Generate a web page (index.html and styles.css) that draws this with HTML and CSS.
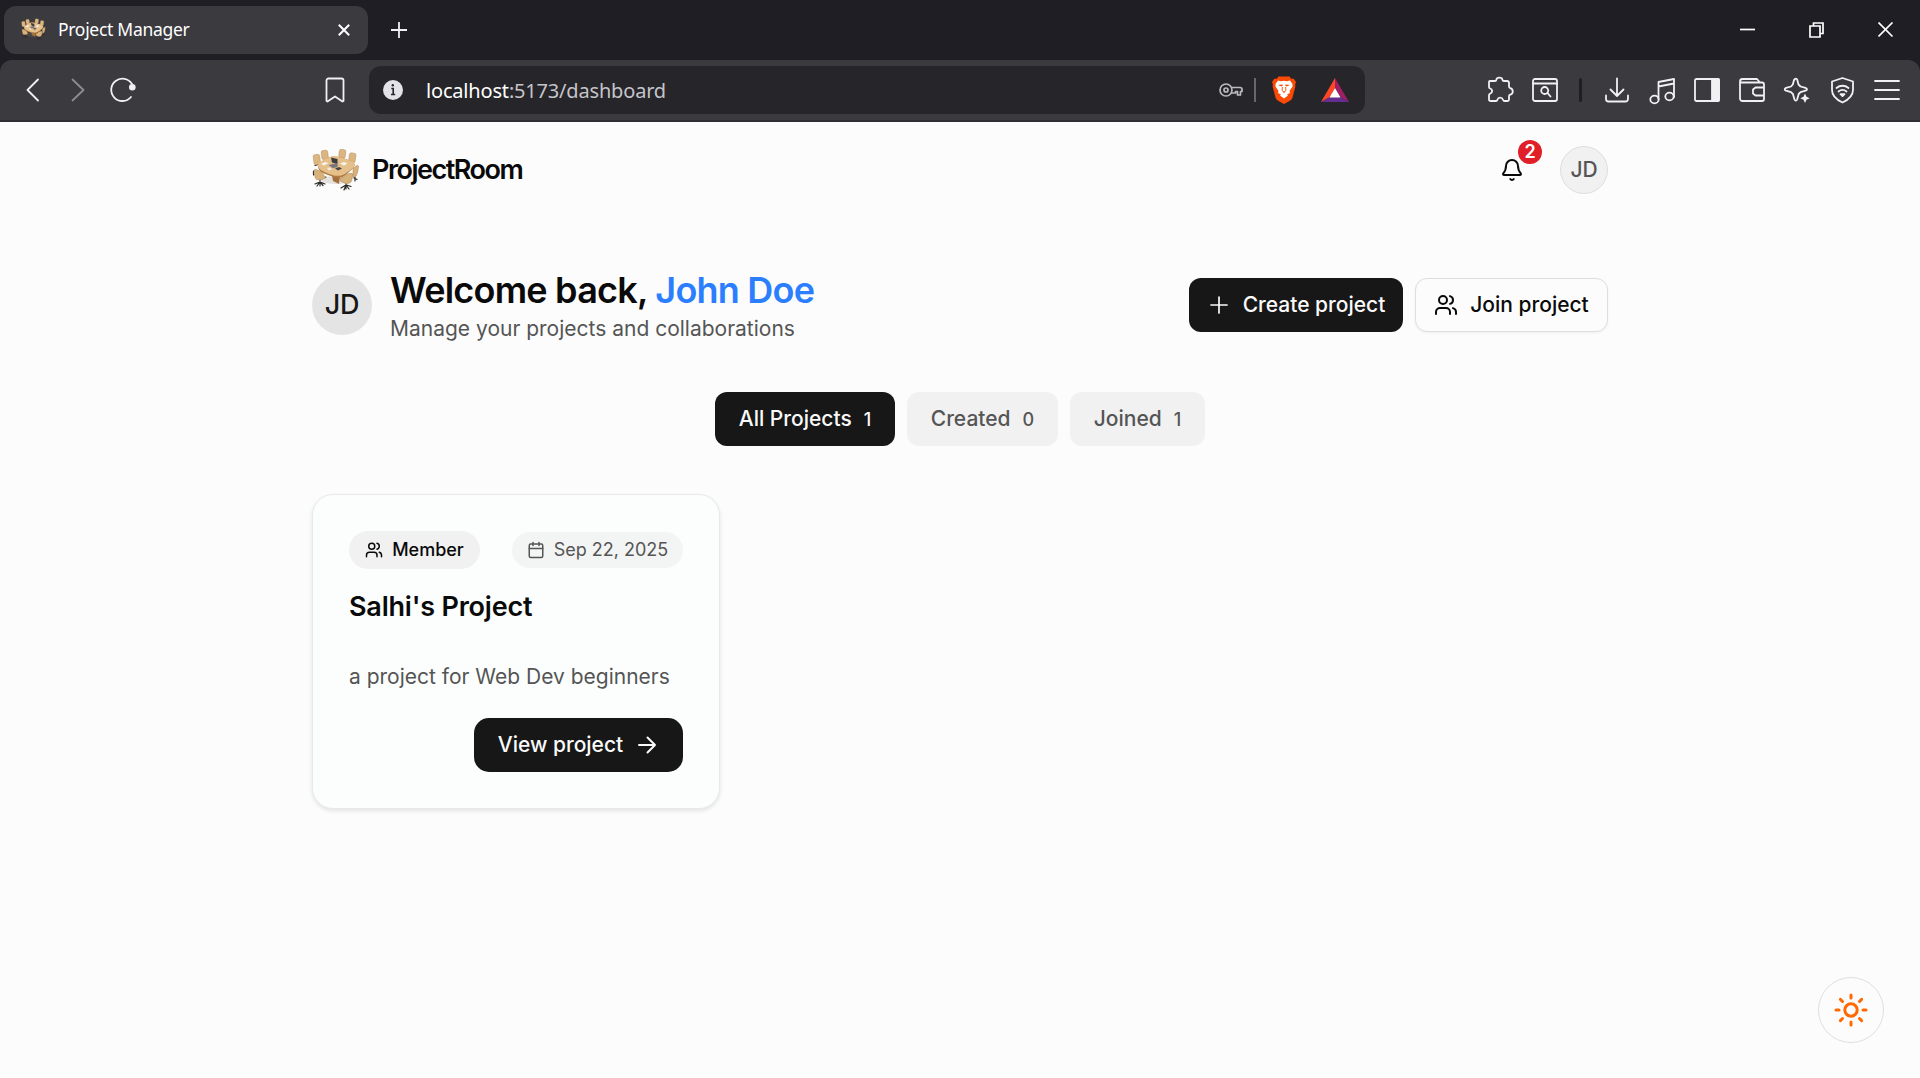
FILE: index.html
```html
<!DOCTYPE html>
<html lang="en">
<head>
<meta charset="utf-8">
<title>Project Manager</title>
<link rel="stylesheet" href="styles.css">
</head>
<body>
<svg class="defs" aria-hidden="true">
  <symbol id="room" viewBox="0 0 48 48">
    <ellipse cx="24" cy="34" rx="15" ry="4" fill="#8a7a68" opacity=".2"/>
    <g fill="none" stroke="#2f2b29" stroke-width="1.200" stroke-linecap="round">
      <path d="M3 19.500l5-1.500M14 13l4-.500M27 11.500l3 1M38 16.500l3 1M8 34v6M3 38l5-2 5 2M5 40l3-4 3 3.500M1.500 29v-4M34 37v6M29 42l5-3 5 1.500M32 44l2-5 3 4M42 32l3 1.500M43 31v4M10 32l4-1"/>
    </g>
    <g fill="#dcb680" stroke="#b08a58" stroke-width=".5">
      <rect x="1.500" y="8.500" width="6.500" height="10" rx="1.800" transform="rotate(-7 5 13)"/>
      <rect x="9.500" y="4.500" width="6.500" height="9" rx="1.800" transform="rotate(-7 12 9)"/>
      <rect x="27" y="3.500" width="6.500" height="8.500" rx="1.800" transform="rotate(7 30 8)"/>
      <rect x="37" y="7" width="6.500" height="9.500" rx="1.800" transform="rotate(7 40 12)"/>
    </g>
    <path d="M20 29l8 1-1 8-6-3z" fill="#a46f3a"/>
    <path d="M6 20c0-2 4-5 9-8 4-2 9-2 14-.500 5 1.500 12 3.500 13.500 6.500 1 3-3 6-9 11-3.500 3-8 3.500-13 1.500C12 27.500 6 26 6 20z" fill="#b17b42"/>
    <path d="M6 19c0-2 4-4.500 9-7 4-2 9-2 14-.500 5 1.500 12 3.500 13.500 6 1 3-3 6-9 10-3.500 2.500-8 3-13 1.500C12 26 6 24 6 19z" fill="#e6c08a"/>
    <path d="M16.500 19l7-1.500 3 1.500-2 2.500-4 .500z" fill="#77777c"/>
    <path d="M19 11.500l6.500 1.500v5l-5.500-1.500z" fill="#3c3c43"/>
    <path d="M9 18l4-2 3.500 1-4.500 2.500zM28 17.500l4-1.500 3.500 1.500-3.500 2z" fill="#f4f4f1"/>
    <path d="M15 22l3.500-.500 1.500 2-3.500 1z" fill="#f1e8dc"/>
    <path d="M23 22.500l4-1.500 3 1.500-4 2z" fill="#4a4644"/>
    <g fill="#d8b27b" stroke="#a97d4c" stroke-width=".5">
      <path d="M2 24.500c0-1.500 3-1 5.500.500 2 1 3.500 2 4 3.500l2 3.500-5 2-4-.500c-1.500-1-2-4-2.500-9z"/>
      <path d="M28.500 32l4-1.500c0-1.500 1-2 3-2.500 3-.800 5-1 5 0 0 3-.500 7-2 8.500l-4 1.500-6-3z"/>
      <path d="M41 23l3-3c1.500-1 2.500-.500 2.500.500-.500 4-1 7-2.500 9.500l-3 1.500z"/>
    </g>
  </symbol>
  <symbol id="users" viewBox="0 0 24 24">
    <path d="M16 21v-2a4 4 0 0 0-4-4H6a4 4 0 0 0-4 4v2M16 3.128a4 4 0 0 1 0 7.744M22 21v-2a4 4 0 0 0-3-3.870"/><circle cx="9" cy="7" r="4"/>
  </symbol>
</svg>

<div class="chrome">
  <div class="tabstrip">
    <div class="tab">
      <svg class="favicon"><use href="#room"/></svg>
      <span class="tab-title">Project Manager</span>
      <svg class="tab-close" viewBox="0 0 12 12"><path d="M.8.800l10.400 10.400M11.200.800L.8 11.200"/></svg>
    </div>
    <svg class="new-tab" viewBox="0 0 18 18"><path d="M9 1v16M1 9h16"/></svg>
    <div class="window-controls">
      <svg viewBox="0 0 16 16"><path d="M0 7.500h15"/></svg>
      <svg viewBox="0 0 16 16"><path d="M1 4h10v11H1zM4.500 4V1H14v10.500h-3"/></svg>
      <svg viewBox="0 0 16 16"><path d="M.5.500l14 14M14.500.500l-14 14"/></svg>
    </div>
  </div>

  <div class="toolbar">
    <div class="nav-icons">
      <svg class="ti" viewBox="0 0 30 30"><path d="M20 4.500L9.500 15 20 25.500"/></svg>
      <svg class="ti dim" viewBox="0 0 30 30"><path d="M9.500 4.500L20.500 15l-11 10.500"/></svg>
      <svg class="ti" viewBox="0 0 30 30"><path d="M24 9A11.200 11.200 0 1 0 23 22"/><circle cx="24.300" cy="12.300" r="3.300" fill="#f1f1f4" stroke="none"/></svg>
    </div>
    <svg class="ti bookmark" viewBox="0 0 30 30"><path d="M6.500 5.500a2 2 0 0 1 2-2h13a2 2 0 0 1 2 2v20.500l-1 .500L15 21.500 7.500 26.500l-1-.500z"/></svg>
    <div class="address">
      <svg class="info" viewBox="0 0 20 20"><circle cx="10" cy="10" r="10" fill="#e2e2e8"/><path d="M8.300 8.500h1.900v6M8 14.500h4.200" fill="none" stroke="#26252a" stroke-width="1.600"/><circle cx="9.800" cy="5.300" r="1.200" fill="#26252a"/></svg>
      <span class="url"><b>localhost</b>:5173/dashboard</span>
      <svg class="key" viewBox="0 0 24 16"><circle cx="7" cy="8" r="6"/><circle cx="7" cy="8" r="2"/><path d="M12.500 5.500H21a2 2 0 0 1 2 2v2h-1.500V13h-3V9.500h-2V11h-4"/></svg>
      <i class="address-sep"></i>
      <svg class="brave" viewBox="0 0 24 28">
        <path d="M6.500.5h11l2 2.500 2-.500L24 6l-1 3 .500 1-3 11.500c-.500 1.500-1.500 2.500-3 3.500L12 28l-5.500-3c-1.500-1-2.500-2-3-3.500L.5 10 1 9 0 6l2.500-3.500 2 .500z" fill="#fb4a05"/>
        <path d="M6 4.500l3 .700 3-.500 3 .500 3-.700L20.500 8v2.500L17.500 15l.500 2-3 1.500 1 1-4 3-4-3 1-1L6 17l.500-2-3-4.500V8z" fill="#fff"/>
        <path d="M6 9l4.500-.6.300 1-1.300 1.200zM18 9l-4.500-.6-.3 1 1.300 1.200z" fill="#fb4a05"/>
        <path d="M10.500 11L10 14.500l2 1.500 2-1.500-.5-3.500M12 16v1.300" fill="none" stroke="#fb4a05" stroke-width=".9"/>
      </svg>
      <svg class="bat" viewBox="0 0 28 24"><path d="M14 0L0 24l9-5 5-9z" fill="#ff4724"/><path d="M14 0l14 24-9-5-5-9z" fill="#9e1f63"/><path d="M0 24l9-5h10l9 5z" fill="#662d91"/><path d="M14 10l-5.500 9.500h11z" fill="#fff"/></svg>
    </div>
    <div class="ext">
      <svg class="ti" viewBox="0 0 30 30"><path d="M5 6h5c.8 0 1.200-.400 1.300-1.200.4-3 5.800-3 6.200 0 .100.800.500 1.200 1.300 1.200H22a2 2 0 0 1 2 2v3.500c0 1 .400 1.400 1.300 1.700 3.300 1 3.300 5.600 0 6.400-.9.200-1.300.600-1.300 1.600V24.500a1.500 1.500 0 0 1-1.500 1.500h-3c-.9 0-1.200-.4-1.500-1.300-1-2.700-4.800-2.700-5.600 0-.2.900-.6 1.300-1.500 1.300H5.500A1.500 1.500 0 0 1 4 24.500V20.300c0-.9.400-1.300 1.200-1.600 2.600-1.200 2.600-4.200 0-5.200C4.400 13.200 4 12.800 4 12V7a1 1 0 0 1 1-1z"/></svg>
      <svg class="ti" viewBox="0 0 30 30"><rect x="3" y="4" width="24" height="22" rx="2"/><path d="M3 8.500h24"/><circle cx="14.700" cy="15.500" r="3.500"/><path d="M17.500 18l3 3.500"/></svg>
      <i class="ext-sep"></i>
      <svg class="ti" viewBox="0 0 30 30"><path d="M15 3.500v17M8.500 14.500L15 21l6.500-6.500M4 20.500V24a2.500 2.500 0 0 0 2.500 2.500h17A2.500 2.500 0 0 0 26 24v-3.500"/></svg>
      <svg class="ti" viewBox="0 0 30 30"><path d="M11.500 24V7L27 4v18M11.500 11.500L27 8.500"/><ellipse cx="7.500" cy="24.500" rx="4.200" ry="3.800"/><ellipse cx="22.500" cy="21.500" rx="4.200" ry="3.800"/></svg>
      <svg class="ti" viewBox="0 0 30 30"><rect x="3" y="4" width="24" height="22" rx="1.500"/><path d="M20 4h6a1 1 0 0 1 1 1v20a1 1 0 0 1-1 1h-6z" fill="#f1f1f4"/></svg>
      <svg class="ti" viewBox="0 0 30 30"><path d="M3 6.500A2.500 2.500 0 0 1 5.500 4h14.500l3 3.500M3 7.500h22a2 2 0 0 1 2 2V24a2 2 0 0 1-2 2H5.500A2.500 2.500 0 0 1 3 23.500zM27 12.500h-8.500l-2.500 2v4l2.500 2H27"/></svg>
      <svg class="ti" viewBox="0 0 30 30"><path d="M13 4c1-.8 2-.2 2.300 1l1.200 4.500 2 2 5 1.300c2 .6 2 2.300 0 2.900l-5 1.500-1.800 1.800-1.500 5.300c-.6 1.700-2.200 1.700-2.800 0L10.900 19 9 17.200l-5-1.500c-1.700-.6-1.700-2.300 0-2.900L9 11.500l1.800-2L12 5z"/><path d="M23 18.500l1.500 3.200 3.200 1.500-3.200 1.500L23 28l-1.500-3.300-3.200-1.500 3.200-1.500z" fill="#f1f1f4" stroke="none"/></svg>
      <svg class="ti" viewBox="0 0 30 30"><path d="M15.500 3L26 6.500V15c0 5.500-4 9.500-10.500 12.500C9 24.500 5 20.500 5 15V6.500zM9.500 13c3.500-3 8.500-3 12 0M11.500 16.500c2.500-2 5.500-2 8 0"/><path d="M13.500 19.200h4l-2 2z" fill="#f1f1f4"/></svg>
      <svg class="ti" viewBox="0 0 30 30"><path d="M3 6h24M3 15h24M3 24h24"/></svg>
    </div>
  </div>
</div>

<main class="page">
  <header class="site-header">
    <div class="brand"><svg class="logo"><use href="#room"/></svg><span>ProjectRoom</span></div>
    <div class="account">
      <div class="bell">
        <svg class="icon i24" viewBox="0 0 24 24"><path d="M10.268 21a2 2 0 0 0 3.464 0M3.262 15.326A1 1 0 0 0 4 17h16a1 1 0 0 0 .740-1.673C19.410 13.956 18 12.499 18 8A6 6 0 0 0 6 8c0 4.499-1.411 5.956-2.738 7.326"/></svg>
        <span class="count">2</span>
      </div>
      <div class="avatar small">JD</div>
    </div>
  </header>

  <section class="welcome">
    <div class="avatar">JD</div>
    <div class="greeting">
      <h1>Welcome back, <span>John Doe</span></h1>
      <p>Manage your projects and collaborations</p>
    </div>
    <div class="actions">
      <button class="btn dark create"><svg class="icon thin i24" viewBox="0 0 24 24"><path d="M4 12h16M12 4v16"/></svg><span>Create project</span></button>
      <button class="btn outline"><svg class="icon i24"><use href="#users"/></svg><span>Join project</span></button>
    </div>
  </section>

  <nav class="filters">
    <button class="filter active w-all"><span>All Projects</span><small>1</small></button>
    <button class="filter w-created"><span>Created</span><small>0</small></button>
    <button class="filter w-joined"><span>Joined</span><small>1</small></button>
  </nav>

  <article class="card">
    <div class="meta">
      <span class="pill role"><svg class="icon i18"><use href="#users"/></svg><span>Member</span></span>
      <span class="pill date"><svg class="icon i18" viewBox="0 0 24 24"><path d="M8 2v4M16 2v4M3 10h18"/><rect x="3" y="4" width="18" height="18" rx="2"/></svg><span>Sep 22, 2025</span></span>
    </div>
    <h2>Salhi's Project</h2>
    <p>a project for Web Dev beginners</p>
    <button class="btn dark view"><span>View project</span><svg class="icon i24" viewBox="0 0 24 24"><path d="M4 12h16M12.500 4.500L20 12l-7.500 7.500"/></svg></button>
  </article>

  <button class="theme"><svg viewBox="0 0 36 36"><circle cx="18" cy="18" r="6.200"/><path d="M18 3v3M18 30v3M3 18h3M30 18h3M7.400 7.400l2.100 2.100M26.500 26.500l2.100 2.100M7.400 28.600l2.100-2.100M26.500 9.500l2.100-2.100"/></svg></button>
</main>
</body>
</html>
```
FILE: styles.css
```css
* { box-sizing: border-box; }
body { margin: 0; height: 1078px; overflow: hidden; display: flex; flex-direction: column; background: #fcfcfc; color: #0a0a0a; font-family: Inter, sans-serif; font-size: 21px; }
svg { display: block; flex: none; }
h1, h2, p { margin: 0; }
button { border: 0; font: inherit; color: inherit; padding: 0; }
.defs { position: absolute; width: 0; height: 0; }

/* Browser frame */
.chrome { height: 122px; flex: none; background: #1f1e24; font-family: "Open Sans", sans-serif; }
.tabstrip { height: 60px; display: flex; align-items: center; padding-left: 4px; }
.tab { width: 364px; height: 48px; display: flex; align-items: center; padding: 0 18px 0 17px; border-radius: 12px; background: #3b3a3f; color: #fff; }
.favicon { width: 25px; height: 25px; margin-top: -2px; }
.tab-title { flex: 1; margin-left: 12px; padding-bottom: 2px; font-family: "Noto Sans", sans-serif; font-size: 17.500px; letter-spacing: -.3px; }
.tab-close { width: 12px; height: 12px; fill: none; stroke: #fff; stroke-width: 2; }
.new-tab { width: 18px; height: 18px; margin-left: 22px; fill: none; stroke: #f1f1f4; stroke-width: 1.800; }
.window-controls { margin-left: auto; display: flex; gap: 53px; padding-right: 26px; }
.window-controls svg { width: 16px; height: 16px; fill: none; stroke: #fff; stroke-width: 1.700; }
.toolbar { height: 62px; display: flex; align-items: center; padding: 0 18px 2px; background: #3b3a3f; border-radius: 12px 12px 0 0; box-shadow: inset 0 -2px #302f34; }
.ti { width: 30px; height: 30px; fill: none; stroke: #f1f1f4; stroke-width: 1.800; stroke-linecap: round; stroke-linejoin: round; }
.dim { opacity: .45; }
.nav-icons { display: flex; gap: 15px; }
.bookmark { margin-left: 182px; }
.address { width: 996px; height: 48px; margin-left: 19px; display: flex; align-items: center; padding: 0 16px 0 14px; background: #26252a; border-radius: 12px; }
.info { width: 20px; height: 20px; }
.url { flex: 1; margin-left: 23px; color: #c5c4c9; font-family: "Noto Sans", sans-serif; font-size: 20px; letter-spacing: -.18px; }
.url b { color: #fff; font-weight: 400; }
.key { width: 24px; height: 16px; margin-right: 11px; fill: none; stroke: #b9b9bf; stroke-width: 1.700; stroke-linejoin: round; }
.address-sep { width: 2px; height: 24px; background: #67666c; }
.brave { width: 24px; height: 28px; margin-left: 16px; }
.bat { width: 28px; height: 24px; margin-left: 25px; }
.ext { margin-left: auto; display: flex; align-items: center; gap: 15px; }
.ext-sep { width: 3px; height: 24px; margin: 0 5px 0 4px; border-radius: 2px; background: #1f1e24; }

/* Application */
.page { width: 1296px; flex: 1; margin: 0 auto; display: flex; flex-direction: column; }
.icon { fill: none; stroke: currentColor; stroke-width: 2; stroke-linecap: round; stroke-linejoin: round; }
.thin { stroke-width: 1.700; }
.i24 { width: 24px; height: 24px; }
.i18 { width: 18px; height: 18px; }
.site-header { height: 96px; display: flex; align-items: center; justify-content: space-between; }
.brand { display: flex; align-items: center; gap: 12px; font-size: 27px; font-weight: 600; letter-spacing: -1.500px; }
.brand span { padding-bottom: 2px; }
.logo { width: 48px; height: 48px; }
.account { display: flex; align-items: center; gap: 36px; }
.bell { position: relative; }
.count { position: absolute; left: 18px; top: -18px; width: 24px; height: 24px; border-radius: 50%; background: #e01f28; color: #fff; font-size: 18px; line-height: 23px; font-weight: 600; text-align: center; }
.avatar { width: 60px; height: 60px; flex: none; border-radius: 50%; display: flex; align-items: center; justify-content: center; padding-bottom: 2px; background: #e4e4e4; color: #171717; font-size: 27px; font-weight: 550; letter-spacing: -.2px; }
.avatar.small { width: 48px; height: 48px; background: #f1f1f1; border: 1px solid #dedede; color: #555; font-size: 21px; letter-spacing: -.1px; }
.welcome { height: 72px; margin-top: 51px; display: flex; align-items: center; }
.greeting { margin-left: 18px; padding-top: 2px; }
h1 { font-size: 36px; line-height: 45px; font-weight: 600; letter-spacing: -.77px; }
h1 span { color: #2b7fff; }
.greeting p { line-height: 31px; color: #555; }
.actions { margin-left: auto; display: flex; gap: 12px; }
.btn { height: 54px; display: flex; align-items: center; justify-content: center; border-radius: 12px; font-weight: 500; white-space: nowrap; }
.btn span, .filter span { padding-bottom: 1px; }
.dark { background: #171717; color: #fafafa; }
.create { width: 214px; gap: 12px; }
.outline { width: 193px; gap: 12px; background: #fcfcfc; border: 1px solid #dedede; box-shadow: 0 1px 3px #0000000d; }
.filters { margin-top: 51px; display: flex; justify-content: center; gap: 12px; }
.filter { height: 54px; display: flex; align-items: center; justify-content: center; gap: 12px; border-radius: 12px; background: #f1f1f1; color: #555; font-weight: 500; white-space: nowrap; }
.filter small { font-size: 18px; padding-top: 1px; }
.filter.active { background: #171717; color: #fafafa; }
.w-all { width: 180px; }
.w-created { width: 151px; }
.w-joined { width: 135px; }
.card { width: 408px; height: 315px; margin-top: 48px; padding: 36px; display: flex; flex-direction: column; background: #fcfefd; border: 1px solid #e8e9e9; border-radius: 21px; box-shadow: 0 2px 4px #0000001a; }
.meta { height: 38px; display: flex; align-items: center; justify-content: space-between; }
.pill { height: 36px; display: flex; align-items: center; justify-content: center; gap: 9px; border-radius: 19px; font-size: 18px; white-space: nowrap; }
.pill span { padding-bottom: 1px; }
.role { width: 131px; height: 38px; background: #f1f1f1; font-weight: 500; }
.date { width: 171px; background: #f3f4f4; color: #555; }
.card h2 { margin-top: 20px; font-size: 27px; line-height: 36px; font-weight: 600; letter-spacing: -.2px; }
.card p { margin-top: 37px; line-height: 30px; color: #555; }
.view { width: 209px; margin-top: auto; align-self: flex-end; gap: 12px; border-radius: 15px; }
.theme { position: fixed; right: 36px; bottom: 35px; width: 66px; height: 66px; display: flex; align-items: center; justify-content: center; border: 1px solid #dedede; border-radius: 50%; background: #fcfcfc; }
.theme svg { width: 36px; height: 36px; fill: none; stroke: #ff6900; stroke-width: 3; stroke-linecap: round; }
```
